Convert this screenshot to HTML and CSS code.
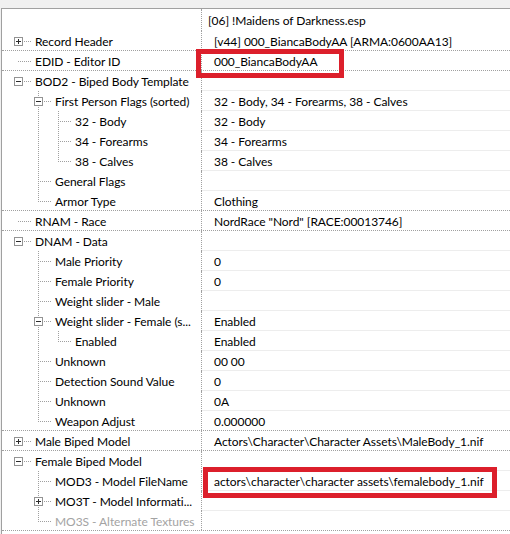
FILE: index.html
```html
<!DOCTYPE html>
<html lang="en">

<head>
    <meta charset="UTF-8">
    <meta name="viewport" content="width=device-width, initial-scale=1.0">
    <title>Record View</title>
    <link rel="stylesheet" href="styles.css">
</head>

<body>
    <div class="tree">
        <div class="head">
            <div class="name"></div>
            <div class="value">[06] !Maidens of Darkness.esp</div>
        </div>

        <div class="row sep">
            <div class="name"><span class="node root"><i class="btn plus"></i></span><span class="label">Record Header</span></div>
            <div class="value">[v44] 000_BiancaBodyAA [ARMA:0600AA13]</div>
        </div>
        <div class="row sep">
            <div class="name"><span class="node root"></span><span class="label">EDID - Editor ID</span></div>
            <div class="value">000_BiancaBodyAA<span class="mark mark-edid"></span></div>
        </div>
        <div class="row">
            <div class="name"><span class="node root"><i class="btn minus"></i></span><span class="label">BOD2 - Biped Body Template</span></div>
            <div class="value"></div>
        </div>
        <div class="row">
            <div class="name"><span class="ln"></span><span class="node mid"><i class="btn minus"></i></span><span class="label">First Person Flags (sorted)</span></div>
            <div class="value">32 - Body, 34 - Forearms, 38 - Calves</div>
        </div>
        <div class="row">
            <div class="name"><span class="ln"></span><span class="ln pipe"></span><span class="node mid"></span><span class="label">32 - Body</span></div>
            <div class="value">32 - Body</div>
        </div>
        <div class="row">
            <div class="name"><span class="ln"></span><span class="ln pipe"></span><span class="node mid"></span><span class="label">34 - Forearms</span></div>
            <div class="value">34 - Forearms</div>
        </div>
        <div class="row">
            <div class="name"><span class="ln"></span><span class="ln pipe"></span><span class="node last"></span><span class="label">38 - Calves</span></div>
            <div class="value">38 - Calves</div>
        </div>
        <div class="row">
            <div class="name"><span class="ln"></span><span class="node mid"></span><span class="label">General Flags</span></div>
            <div class="value"></div>
        </div>
        <div class="row sep">
            <div class="name"><span class="ln"></span><span class="node last"></span><span class="label">Armor Type</span></div>
            <div class="value">Clothing</div>
        </div>
        <div class="row sep">
            <div class="name"><span class="node root"></span><span class="label">RNAM - Race</span></div>
            <div class="value">NordRace "Nord" [RACE:00013746]</div>
        </div>
        <div class="row">
            <div class="name"><span class="node root"><i class="btn minus"></i></span><span class="label">DNAM - Data</span></div>
            <div class="value"></div>
        </div>
        <div class="row">
            <div class="name"><span class="ln"></span><span class="node mid"></span><span class="label">Male Priority</span></div>
            <div class="value">0</div>
        </div>
        <div class="row">
            <div class="name"><span class="ln"></span><span class="node mid"></span><span class="label">Female Priority</span></div>
            <div class="value">0</div>
        </div>
        <div class="row">
            <div class="name"><span class="ln"></span><span class="node mid"></span><span class="label">Weight slider - Male</span></div>
            <div class="value"></div>
        </div>
        <div class="row">
            <div class="name"><span class="ln"></span><span class="node mid"><i class="btn minus"></i></span><span class="label">Weight slider - Female (s...</span></div>
            <div class="value">Enabled</div>
        </div>
        <div class="row">
            <div class="name"><span class="ln"></span><span class="ln pipe"></span><span class="node last"></span><span class="label">Enabled</span></div>
            <div class="value">Enabled</div>
        </div>
        <div class="row">
            <div class="name"><span class="ln"></span><span class="node mid"></span><span class="label">Unknown</span></div>
            <div class="value">00 00</div>
        </div>
        <div class="row">
            <div class="name"><span class="ln"></span><span class="node mid"></span><span class="label">Detection Sound Value</span></div>
            <div class="value">0</div>
        </div>
        <div class="row">
            <div class="name"><span class="ln"></span><span class="node mid"></span><span class="label">Unknown</span></div>
            <div class="value">0A</div>
        </div>
        <div class="row sep">
            <div class="name"><span class="ln"></span><span class="node last"></span><span class="label">Weapon Adjust</span></div>
            <div class="value">0.000000</div>
        </div>
        <div class="row sep">
            <div class="name"><span class="node root"><i class="btn plus"></i></span><span class="label">Male Biped Model</span></div>
            <div class="value">Actors\Character\Character Assets\MaleBody_1.nif</div>
        </div>
        <div class="row">
            <div class="name"><span class="node root"><i class="btn minus"></i></span><span class="label">Female Biped Model</span></div>
            <div class="value"></div>
        </div>
        <div class="row">
            <div class="name"><span class="ln"></span><span class="node mid"></span><span class="label">MOD3 - Model FileName</span></div>
            <div class="value">actors\character\character assets\femalebody_1.nif<span class="mark mark-mod3"></span></div>
        </div>
        <div class="row">
            <div class="name"><span class="ln"></span><span class="node mid"><i class="btn plus"></i></span><span class="label">MO3T - Model Informati...</span></div>
            <div class="value"></div>
        </div>
        <div class="row sep">
            <div class="name"><span class="ln"></span><span class="node last"></span><span class="label muted">MO3S - Alternate Textures</span></div>
            <div class="value"></div>
        </div>
    </div>
</body>

</html>
```

FILE: styles.css
```css
:root {
    --line: #a0a0a0;
    --hdots: repeating-linear-gradient(to right, var(--line) 0 1px, transparent 1px 2px);
    --vdots: repeating-linear-gradient(to bottom, var(--line) 0 1px, transparent 1px 2px);
}

body {
    margin: 0;
    padding: 0;
    font-family: Lato, "Noto Sans", Arial, sans-serif;
    font-size: 12px;
    letter-spacing: -0.05px;
    color: #000;
    background-color: #f0f0f0;
}

.tree {
    margin: 8px 0 0 1px;
    height: 526px;
    box-sizing: border-box;
    border-top: 1px solid #a0a0a0;
    border-left: 1px solid #a0a0a0;
    background: #ffffff;
    overflow: hidden;
}

.head,
.row {
    display: flex;
    height: 20px;
    box-sizing: border-box;
}

.head {
    height: 22px;
}

.row.sep {
    border-bottom: 1px dotted var(--line);
}

.name {
    flex: none;
    display: flex;
    width: 193px;
    padding-left: 6px;
    border-right: 1px dotted var(--line);
    white-space: nowrap;
    overflow: hidden;
}

.value {
    flex: 1;
    position: relative;
    display: flex;
    align-items: center;
    padding-left: 12px;
    padding-top: 1px;
    white-space: nowrap;
    box-sizing: border-box;
}

.head .value {
    padding-left: 6px;
}

.row:not(.sep) .value {
    border-bottom: 1px solid #ededed;
}

.label {
    align-self: center;
    padding-top: 1px;
}

.muted {
    color: #a3a3a3;
}

/* tree connector lines */
.ln,
.node {
    flex: none;
    display: block;
    width: 20px;
    background-repeat: no-repeat;
}

.node {
    width: 27px;
}

.ln.pipe {
    background-image: var(--vdots);
    background-size: 1px 100%;
    background-position: 10px 0;
}

.node.root {
    background-image: var(--hdots);
    background-size: 13px 1px;
    background-position: 10px 10px;
}

.node.mid {
    background-image: var(--hdots), var(--vdots);
    background-size: 13px 1px, 1px 100%;
    background-position: 10px 10px, 10px 0;
}

.node.last {
    background-image: var(--hdots), var(--vdots);
    background-size: 13px 1px, 1px 10px;
    background-position: 10px 10px, 10px 0;
}

.btn {
    display: block;
    width: 7px;
    height: 7px;
    margin: 6px 0 0 6px;
    border: 1px solid #939393;
}

.btn.minus {
    background: linear-gradient(#2b2b2b, #2b2b2b) no-repeat 1px 3px / 5px 1px, #ffffff;
}

.btn.plus {
    background:
        linear-gradient(#2b2b2b, #2b2b2b) no-repeat 1px 3px / 5px 1px,
        linear-gradient(#2b2b2b, #2b2b2b) no-repeat 3px 1px / 1px 5px,
        #ffffff;
}

/* red highlight boxes */
.mark {
    position: absolute;
    z-index: 1;
    box-sizing: border-box;
    border: 5px solid #dc1f2b;
}

.mark-edid {
    left: -6px;
    top: -2px;
    width: 148px;
    height: 29px;
}

.mark-mod3 {
    left: 1px;
    top: -4px;
    width: 294px;
    height: 31px;
}
```
